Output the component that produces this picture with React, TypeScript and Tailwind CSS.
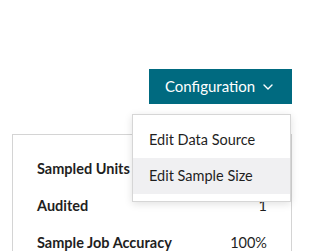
import React from 'react';

const rows = [
  { label: 'Sampled Units', value: '1' },
  { label: 'Audited', value: '1' },
  { label: 'Sample Job Accuracy', value: '100%' },
];

export default function App() {
  return (
    <div className="w-[334px] h-[251px] overflow-hidden bg-white font-['Lato',sans-serif] text-[#1f1f1f]">
      <div className="ml-[12px] w-[280px] pt-[69px]">
        <div className="relative flex justify-end">
          <button className="flex h-[35px] w-[143px] items-center bg-[#006a80] pl-[16px] text-[15px] text-white">
            <span>Configuration</span>
            <svg className="ml-[8px]" width="10" height="6" viewBox="0 0 10 6" fill="none">
              <path d="M1 1l4 4 4-4" stroke="white" strokeWidth="1.4" strokeLinecap="round" strokeLinejoin="round" />
            </svg>
          </button>
          <div className="absolute right-[1px] top-[45px] z-10 w-[159px] border border-[#d6d6d6] bg-white py-[7px] shadow-[0_2px_8px_rgba(0,0,0,0.12)]">
            <div className="flex h-[36px] items-center px-[16px] text-[14.5px]">Edit Data Source</div>
            <div className="flex h-[36px] items-center bg-[#f0f0f2] px-[16px] text-[14.5px]">Edit Sample Size</div>
          </div>
        </div>
        <div className="mt-[30px] h-[140px] border border-[#d4d4d4] px-[24px] pt-[15px]">
          {rows.map((row) => (
            <div key={row.label} className="flex h-[37px] items-center justify-between text-[14.5px]">
              <span className="font-bold">{row.label}</span>
              <span>{row.value}</span>
            </div>
          ))}
        </div>
      </div>
    </div>
  );
}
